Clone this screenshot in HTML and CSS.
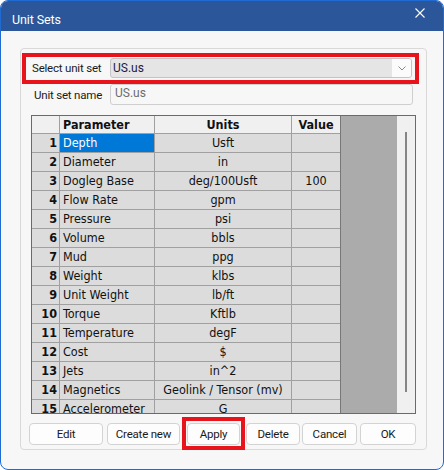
FILE: index.html
```html
<!DOCTYPE html>
<html>
<head>
<meta charset="utf-8">
<link rel="stylesheet" href="styles.css">
</head>
<body>
<div class="window">
  <div class="titlebar">
    <span class="title">Unit Sets</span>
    <svg class="close" width="10" height="10" viewBox="0 0 10 10"><path d="M0.5 0.5 L9.5 9.5 M9.5 0.5 L0.5 9.5" stroke="#ffffff" stroke-width="1.1" fill="none"/></svg>
  </div>
  <div class="client">
    <div class="group">
      <div class="mark mark-combo">
        <div class="field-row">
          <span class="label">Select unit set</span>
          <div class="combo">
            <span class="combo-text">US.us</span>
            <span class="combo-btn"><svg width="8" height="5" viewBox="0 0 8 5"><path d="M0.5 0.5 L4 4 L7.5 0.5" stroke="#8a8a8a" stroke-width="1" fill="none"/></svg></span>
          </div>
        </div>
      </div>
      <div class="field-row name-row">
        <span class="label label2">Unit set name</span>
        <div class="textbox">US.us</div>
      </div>
      <div class="table">
        <div class="grid-wrap">
          <div class="grid">
            <div class="c hd"></div><div class="c hd left">Parameter</div><div class="c hd">Units</div><div class="c hd">Value</div>
            <div class="c num">1</div><div class="c left sel">Depth</div><div class="c">Usft</div><div class="c"></div>
            <div class="c num">2</div><div class="c left">Diameter</div><div class="c">in</div><div class="c"></div>
            <div class="c num">3</div><div class="c left">Dogleg Base</div><div class="c">deg/100Usft</div><div class="c">100</div>
            <div class="c num">4</div><div class="c left">Flow Rate</div><div class="c">gpm</div><div class="c"></div>
            <div class="c num">5</div><div class="c left">Pressure</div><div class="c">psi</div><div class="c"></div>
            <div class="c num">6</div><div class="c left">Volume</div><div class="c">bbls</div><div class="c"></div>
            <div class="c num">7</div><div class="c left">Mud</div><div class="c">ppg</div><div class="c"></div>
            <div class="c num">8</div><div class="c left">Weight</div><div class="c">klbs</div><div class="c"></div>
            <div class="c num">9</div><div class="c left">Unit Weight</div><div class="c">lb/ft</div><div class="c"></div>
            <div class="c num">10</div><div class="c left">Torque</div><div class="c">Kftlb</div><div class="c"></div>
            <div class="c num">11</div><div class="c left">Temperature</div><div class="c">degF</div><div class="c"></div>
            <div class="c num">12</div><div class="c left">Cost</div><div class="c">$</div><div class="c"></div>
            <div class="c num">13</div><div class="c left">Jets</div><div class="c">in^2</div><div class="c"></div>
            <div class="c num">14</div><div class="c left">Magnetics</div><div class="c">Geolink / Tensor (mv)</div><div class="c"></div>
            <div class="c num">15</div><div class="c left">Accelerometer</div><div class="c">G</div><div class="c"></div>
          </div>
        </div>
        <div class="empty"></div>
        <div class="scrollbar"><div class="thumb"></div></div>
      </div>
      <div class="buttons">
        <button class="btn b-edit">Edit</button>
        <button class="btn b-new">Create new</button>
        <div class="mark mark-apply"><button class="btn b-apply">Apply</button></div>
        <button class="btn b-del">Delete</button>
        <button class="btn b-cancel">Cancel</button>
        <button class="btn b-ok">OK</button>
      </div>
    </div>
  </div>
</div>
</body>
</html>
```
FILE: styles.css
```css
html, body {
  margin: 0;
  padding: 0;
  background: #ffffff;
}
.window {
  width: 444px;
  height: 470px;
  box-sizing: border-box;
  border: 1px solid #1f6bd2;
  border-radius: 8px;
  overflow: hidden;
  background: #f7f7f7;
  display: flex;
  flex-direction: column;
  font-family: Roboto, "Liberation Sans", sans-serif;
}
.titlebar {
  height: 30px;
  flex: none;
  background: #2b579a;
  display: flex;
  justify-content: space-between;
  align-items: flex-start;
  padding: 0 18px 0 11px;
}
.title {
  color: #ffffff;
  font-size: 12.5px;
  margin-top: 11px;
  line-height: 15px;
  letter-spacing: -0.1px;
}
.close {
  margin-top: 7px;
}
.client {
  padding: 17px 0 0 19px;
}
.group {
  width: 407px;
  box-sizing: border-box;
  border: 1px solid #d9d9d9;
  border-radius: 4px;
  padding: 4px 0 4px 0;
}
.mark {
  border: 4px solid #e8141c;
  box-sizing: border-box;
}
.mark-combo {
  margin-left: 1px;
  width: 397px;
  height: 31px;
  padding-top: 1px;
}
.field-row {
  display: flex;
  align-items: center;
}
.label {
  font-size: 11.5px;
  letter-spacing: -0.2px;
  color: #1a1a1a;
  width: 84px;
  box-sizing: border-box;
  padding-left: 6px;
  flex: none;
}
.label2 {
  width: 89px;
  padding-left: 13px;
}
.combo {
  width: 302px;
  height: 20px;
  box-sizing: border-box;
  border: 1px solid #c4c4c4;
  border-radius: 3px;
  background: #e5e5e5;
  display: flex;
  align-items: center;
  justify-content: space-between;
  overflow: hidden;
}
.combo-text {
  font-size: 12px;
  color: #1b1b4a;
  padding-left: 2px;
}
.combo-btn {
  width: 19px;
  height: 18px;
  background: #fbfbfb;
  display: flex;
  align-items: center;
  justify-content: center;
}
.name-row {
  height: 21px;
}
.textbox {
  width: 303px;
  height: 21px;
  box-sizing: border-box;
  border: 1px solid #cfcfcf;
  border-radius: 3px;
  background: #f7f7f7;
  font-size: 12px;
  color: #6d6d6d;
  padding-left: 4px;
  line-height: 17px;
}
.table {
  margin: 10px 0 0 10px;
  width: 385px;
  height: 299px;
  box-sizing: border-box;
  border: 1px solid #6a6a6a;
  display: flex;
  background: #ababab;
}
.grid-wrap {
  width: 309px;
  height: 297px;
  overflow: hidden;
  flex: none;
  border-right: 1px solid #777777;
  box-sizing: border-box;
}
.grid {
  display: grid;
  grid-template-columns: 27px 94px 136px 48px;
  grid-template-rows: 17px;
  grid-auto-rows: 18px;
  gap: 1px;
  background: #a0a0a0;
  font-family: "DejaVu Sans Condensed", "DejaVu Sans", sans-serif;
  font-size: 12.5px;
  color: #111111;
}
.c {
  background: #dcdcdc;
  display: flex;
  align-items: center;
  justify-content: center;
  white-space: nowrap;
  overflow: hidden;
  line-height: 18px;
}
.c.left {
  justify-content: flex-start;
  padding-left: 3px;
}
.c.hd {
  background: #f0f0f0;
  font-weight: bold;
}
.c.num {
  justify-content: flex-end;
  padding-right: 2px;
  font-weight: bold;
}
.c.sel {
  background: #0078d7;
  color: #ffffff;
}
.empty {
  width: 56px;
  flex: none;
  background: #ababab;
}
.scrollbar {
  width: 18px;
  flex: none;
  background: #f0f0f0;
  position: relative;
}
.thumb {
  position: absolute;
  left: 8px;
  top: 16px;
  width: 2px;
  height: 260px;
  background: #858585;
}
.buttons {
  display: flex;
  align-items: center;
  height: 22px;
  margin-top: 9px;
  padding-left: 8px;
}
.btn {
  height: 22px;
  box-sizing: border-box;
  border: 1px solid #d3d3d3;
  border-radius: 4px;
  background: #fdfdfd;
  font-family: Roboto, "Liberation Sans", sans-serif;
  font-size: 11.5px;
  letter-spacing: -0.2px;
  color: #1a1a1a;
  padding: 0;
  flex: none;
}
.b-edit { width: 74px; }
.b-new { width: 73px; margin-left: 4px; }
.mark-apply {
  width: 63px;
  height: 33px;
  margin: -6px 0 -5px 2px;
  padding: 1px 0 0 0;
  display: flex;
  align-items: center;
  justify-content: center;
  flex: none;
}
.b-apply { width: 53px; }
.b-del { width: 54px; margin-left: 1px; }
.b-cancel { width: 55px; margin-left: 2px; }
.b-ok { width: 56px; margin-left: 3px; }
```
